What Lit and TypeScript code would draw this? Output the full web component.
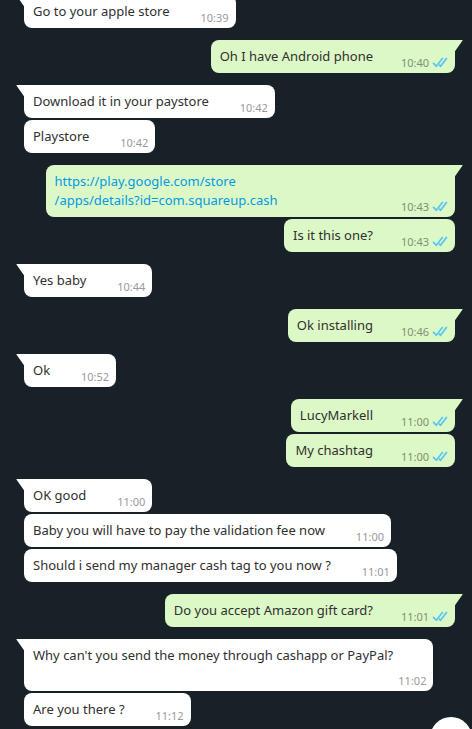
import { LitElement, html, css, svg, nothing } from "lit";
import { customElement, property } from "lit/decorators.js";

interface Message {
  side: "in" | "out";
  text: string;
  time: string;
  link?: string[];
}

const messages: Message[] = [
  { side: "in", text: "Go to your apple store", time: "10:39" },
  { side: "out", text: "Oh I have Android phone", time: "10:40" },
  { side: "in", text: "Download it in your paystore", time: "10:42" },
  { side: "in", text: "Playstore", time: "10:42" },
  {
    side: "out",
    text: "",
    link: ["https://play.google.com/store", "/apps/details?id=com.squareup.cash"],
    time: "10:43",
  },
  { side: "out", text: "Is it this one?", time: "10:43" },
  { side: "in", text: "Yes baby", time: "10:44" },
  { side: "out", text: "Ok installing", time: "10:46" },
  { side: "in", text: "Ok", time: "10:52" },
  { side: "out", text: "LucyMarkell", time: "11:00" },
  { side: "out", text: "My chashtag", time: "11:00" },
  { side: "in", text: "OK good", time: "11:00" },
  { side: "in", text: "Baby you will have to pay the validation fee now", time: "11:00" },
  { side: "in", text: "Should i send my manager cash tag to you now ?", time: "11:01" },
  { side: "out", text: "Do you accept Amazon gift card?", time: "11:01" },
  { side: "in", text: "Why can't you send the money through cashapp or PayPal?", time: "11:02" },
  { side: "in", text: "Are you there ?", time: "11:12" },
];

const tailIn = svg`<path d="M0.6,1.8 L8,12.193 V1 H1 C.4,1 .2,1.4 .6,1.8z"/>`;
const tailOut = svg`<path d="M7.4,1.8 L0,12.193 V1 H7 C7.6,1 7.8,1.4 7.4,1.8z"/>`;

@customElement("chat-bubble")
export class ChatBubble extends LitElement {
  @property({ attribute: false }) message!: Message;
  @property({ type: Boolean }) first = false;

  static styles = css`
    :host {
      display: flex;
    }
    .bubble {
      position: relative;
      box-sizing: border-box;
      max-width: 95%;
      padding: 7px 7px 7px 9px;
      border-radius: 8px;
      font-size: 13px;
      line-height: 19px;
      color: #303030;
      overflow-wrap: break-word;
    }
    .in {
      background: #ffffff;
      margin-right: auto;
    }
    .out {
      background: #dcf8c6;
      margin-left: auto;
    }
    .in.first {
      border-top-left-radius: 0;
    }
    .out.first {
      border-top-right-radius: 0;
    }
    .tail {
      position: absolute;
      top: 0;
      width: 8px;
      height: 12px;
    }
    .in .tail {
      right: 100%;
      fill: #ffffff;
    }
    .out .tail {
      left: 100%;
      fill: #dcf8c6;
    }
    .spacer {
      display: inline-block;
      width: 59px;
      height: 1px;
    }
    .out .spacer {
      width: 75px;
    }
    .meta {
      position: absolute;
      right: 7px;
      bottom: 3px;
      display: flex;
      align-items: center;
      gap: 3px;
      font-size: 11px;
      line-height: 15px;
      color: #999999;
    }
    .out .meta {
      color: #7f9174;
    }
    .ticks {
      width: 16px;
      height: 15px;
      fill: #4fc3f7;
      stroke: #4fc3f7;
      stroke-width: 0.4;
    }
    a {
      color: #039be5;
      text-decoration: none;
    }
    .part {
      display: inline-block;
      max-width: 100%;
    }
  `;

  render() {
    const { side, text, time, link } = this.message;
    const spacer = html`<span class="spacer"></span>`;
    return html`
      <div class="bubble ${side} ${this.first ? "first" : ""}">
        ${this.first
          ? html`<svg class="tail" viewBox="0 1 8 12" aria-hidden="true">${side === "in" ? tailIn : tailOut}</svg>`
          : nothing}
        ${link
          ? html`<a href=${link.join("")}
              ><span class="part">${link[0]}</span><span class="part">${link[1]}${spacer}</span></a
            >`
          : html`<span>${text}</span>${spacer}`}
        <div class="meta">
          <time>${time}</time>
          ${side === "out"
            ? html`<svg class="ticks" viewBox="0 0 16 15" role="img" aria-label="Read">
                <path
                  d="M15.01 3.316l-.478-.372a.365.365 0 0 0-.51.063L8.666 9.879a.32.32 0 0 1-.484.033l-.358-.325a.319.319 0 0 0-.484.032l-.378.483a.418.418 0 0 0 .036.541l1.32 1.266c.143.14.361.125.484-.033l6.272-8.048a.366.366 0 0 0-.064-.512zm-4.1 0l-.478-.372a.365.365 0 0 0-.51.063L4.566 9.879a.32.32 0 0 1-.484.033L1.891 7.769a.366.366 0 0 0-.515.006l-.423.433a.364.364 0 0 0 .006.514l3.258 3.185c.143.14.361.125.484-.033l6.272-8.048a.365.365 0 0 0-.063-.51z"
                />
              </svg>`
            : nothing}
        </div>
      </div>
    `;
  }
}

@customElement("app-root")
export class AppRoot extends LitElement {
  static styles = css`
    :host {
      position: relative;
      display: flex;
      flex-direction: column;
      justify-content: flex-end;
      box-sizing: border-box;
      height: 100vh;
      overflow: hidden;
      padding: 0 17px 3px 24px;
      background: #172127;
      font-family: "Noto Sans", "Open Sans", sans-serif;
    }
    chat-bubble {
      flex: none;
      margin-top: 2px;
    }
    chat-bubble[first] {
      margin-top: 12px;
    }
    .scroll-down {
      position: absolute;
      right: 0;
      bottom: -30px;
      width: 42px;
      height: 42px;
      padding: 0;
      border: 0;
      border-radius: 50%;
      background: #ffffff;
    }
  `;

  render() {
    return html`
      ${messages.map(
        (m, i) => html`<chat-bubble .message=${m} ?first=${i === 0 || messages[i - 1].side !== m.side}></chat-bubble>`,
      )}
      <button class="scroll-down" aria-label="Scroll to latest"></button>
    `;
  }
}
